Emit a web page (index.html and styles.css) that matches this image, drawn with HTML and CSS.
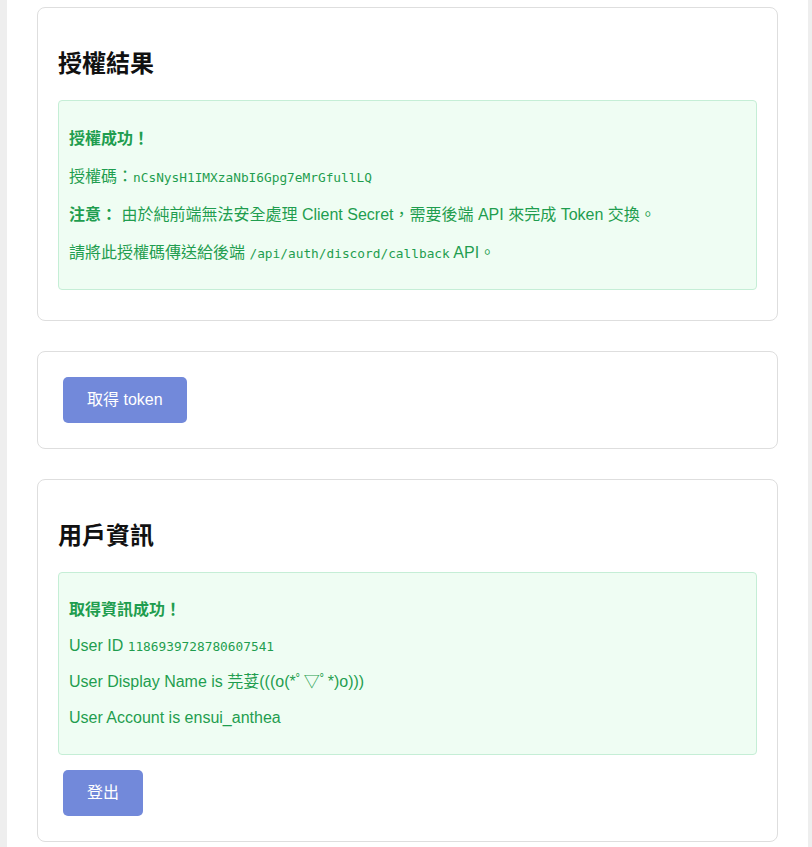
FILE: index.html
```html
<!DOCTYPE html>
<html lang="zh-Hant">
<head>
<meta charset="utf-8">
<title>Discord 授權</title>
<link rel="stylesheet" href="styles.css">
</head>
<body>
<div class="page">
  <section class="card">
    <h2 class="card-title">授權結果</h2>
    <div class="result result-auth">
      <p><strong>授權成功！</strong></p>
      <p>授權碼：<code>nCsNysH1IMXzaNbI6Gpg7eMrGfullLQ</code></p>
      <p><strong>注意：</strong> 由於純前端無法安全處理 Client Secret，需要後端 API 來完成 Token 交換。</p>
      <p>請將此授權碼傳送給後端 <code>/api/auth/discord/callback</code> API。</p>
    </div>
  </section>

  <section class="card">
    <button class="btn" type="button">取得 token</button>
  </section>

  <section class="card">
    <h2 class="card-title">用戶資訊</h2>
    <div class="result result-user">
      <p><strong>取得資訊成功！</strong></p>
      <p>User ID <code>1186939728780607541</code></p>
      <p>User Display Name is 芫荽(((o(*ﾟ▽ﾟ*)o)))</p>
      <p>User Account is ensui_anthea</p>
    </div>
    <button class="btn" type="button">登出</button>
  </section>
</div>
</body>
</html>
```

FILE: styles.css
```css
html, body {
  margin: 0;
  padding: 0;
}

body {
  background: #eeeeee;
  font-family: "Liberation Sans", "Noto Sans CJK TC", sans-serif;
  font-size: 16px;
  color: #222;
}

.page {
  width: 801px;
  margin-left: 7px;
  background: #ffffff;
  box-sizing: border-box;
  padding: 7px 30px 30px;
  min-height: 847px;
}

.card {
  border: 1px solid #dedede;
  border-radius: 8px;
  padding: 20px;
  margin-bottom: 30px;
  background: #fff;
}

.card-title {
  margin: 20px 0;
  font-size: 24px;
  line-height: 32px;
  font-weight: 700;
  color: #111;
}

.result {
  margin: 10px 0;
  padding: 14px 10px;
  background: #effdf3;
  border: 1px solid #c5eed6;
  border-radius: 4px;
  color: #1f9d4f;
}

.result p {
  margin: 10px 0;
  line-height: 26px;
}

.result-auth {
  padding-bottom: 12px;
}

.result-auth p {
  line-height: 28px;
}

.result-user {
  padding-bottom: 13px;
}

.result strong {
  font-weight: 700;
}

.result code {
  font-family: "DejaVu Sans Mono", "Liberation Mono", monospace;
  font-size: 12.8px;
  line-height: 1;
}

.btn {
  margin: 5px;
  padding: 12px 24px;
  font-family: "Liberation Sans", "Noto Sans CJK TC", sans-serif;
  font-size: 16px;
  line-height: 22px;
  color: #ffffff;
  background: #7289da;
  border: none;
  border-radius: 5px;
  cursor: pointer;
}
```
